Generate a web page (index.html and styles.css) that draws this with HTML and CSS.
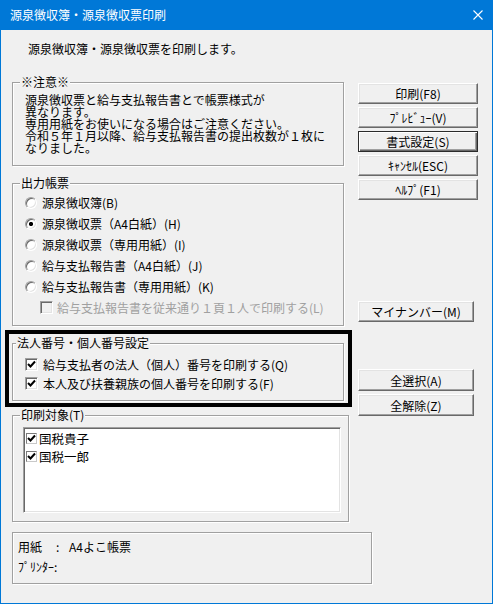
FILE: index.html
```html
<!DOCTYPE html>
<html lang="ja">
<head>
<meta charset="utf-8">
<title>源泉徴収簿・源泉徴収票印刷</title>
<link rel="stylesheet" href="styles.css">
</head>
<body>
<div class="window">
  <div class="titlebar">
    <span class="title">源泉徴収簿・源泉徴収票印刷</span>
    <svg class="close" width="10" height="10" viewBox="0 0 10 10"><path d="M0.5 0.5 L9.5 9.5 M9.5 0.5 L0.5 9.5" stroke="#fff" stroke-width="1.1" fill="none"/></svg>
  </div>
  <div class="client">
    <p class="intro">源泉徴収簿・源泉徴収票を印刷します。</p>
    <div class="main">
      <div class="left">
        <div class="group notice">
          <div class="legend">※注意※</div>
          <div class="notice-text">源泉徴収票と給与支払報告書とで帳票様式が<br>異なります。<br>専用用紙をお使いになる場合はご注意ください。<br>令和５年１月以降、給与支払報告書の提出枚数が１枚に<br>なりました。</div>
        </div>
        <div class="group output">
          <div class="legend">出力帳票</div>
          <div class="options">
            <div class="opt"><span class="rb"></span><span>源泉徴収簿(B)</span></div>
            <div class="opt"><span class="rb on"></span><span>源泉徴収票（A4白紙）(H)</span></div>
            <div class="opt"><span class="rb"></span><span>源泉徴収票（専用用紙）(I)</span></div>
            <div class="opt"><span class="rb"></span><span>給与支払報告書（A4白紙）(J)</span></div>
            <div class="opt"><span class="rb"></span><span>給与支払報告書（専用用紙）(K)</span></div>
            <div class="opt sub dis"><span class="cb off"></span><span>給与支払報告書を従来通り１頁１人で印刷する(L)</span></div>
          </div>
        </div>
        <div class="bold">
          <div class="group inner">
            <div class="legend near">法人番号・個人番号設定</div>
            <div class="checks">
              <div class="chk"><span class="cb"><svg width="9" height="9" viewBox="0 0 9 9"><path d="M1 4 L3.5 6.5 L8 1.5" stroke="#000" stroke-width="2" fill="none"/></svg></span><span>給与支払者の法人（個人）番号を印刷する(Q)</span></div>
              <div class="chk"><span class="cb"><svg width="9" height="9" viewBox="0 0 9 9"><path d="M1 4 L3.5 6.5 L8 1.5" stroke="#000" stroke-width="2" fill="none"/></svg></span><span>本人及び扶養親族の個人番号を印刷する(F)</span></div>
            </div>
          </div>
        </div>
        <div class="group target">
          <div class="legend">印刷対象(T)</div>
          <div class="listbox">
            <div class="item"><span class="cb small"><svg width="9" height="9" viewBox="0 0 9 9"><path d="M1 4 L3.5 6.5 L8 1.5" stroke="#000" stroke-width="2" fill="none"/></svg></span><span>国税貴子</span></div>
            <div class="item"><span class="cb small"><svg width="9" height="9" viewBox="0 0 9 9"><path d="M1 4 L3.5 6.5 L8 1.5" stroke="#000" stroke-width="2" fill="none"/></svg></span><span>国税一郎</span></div>
          </div>
        </div>
      </div>
      <div class="right">
        <button class="btn b-first">印刷(F8)</button>
        <button class="btn b-next">ﾌﾟﾚﾋﾞｭｰ(V)</button>
        <button class="btn b-next default">書式設定(S)</button>
        <button class="btn b-next">ｷｬﾝｾﾙ(ESC)</button>
        <button class="btn b-next">ﾍﾙﾌﾟ(F1)</button>
        <button class="btn narrow b-mynum">マイナンバー(M)</button>
        <button class="btn narrow tall b-all">全選択(A)</button>
        <button class="btn narrow tall b-none">全解除(Z)</button>
      </div>
    </div>
    <div class="info">
      <div class="info-line"><span class="k">用紙</span><span class="colon">:</span><span>A4よこ帳票</span></div>
      <div class="info-line">ﾌﾟﾘﾝﾀｰ:</div>
    </div>
  </div>
</div>
</body>
</html>
```

FILE: styles.css
```css
* { box-sizing: border-box; }
body {
  margin: 0;
  font-family: "Noto Sans CJK JP", "Noto Sans", sans-serif;
  font-size: 12px;
  color: #000;
  background: #f0f0f0;
}
.window {
  width: 493px;
  height: 604px;
  border: 1px solid #0078d7;
  border-top: none;
  background: #f0f0f0;
}
.titlebar {
  height: 30px;
  background: #0078d7;
  color: #fff;
  display: flex;
  align-items: center;
  justify-content: space-between;
  padding: 0 9px 0 9px;
}
.title { line-height: 12px; }
.close { display: block; }
.intro {
  margin: 13px 0 0 27px;
  line-height: 12px;
}
.main {
  display: flex;
  gap: 6px;
  margin: 27px 0 0 4px;
}
.left { width: 347px; }
.right {
  width: 120px;
  display: flex;
  flex-direction: column;
}
.group {
  margin-left: 7px;
  width: 332px;
  border: 1px solid #a0a0a0;
  box-shadow: inset 1px 1px 0 #fff, 1px 1px 0 #fff;
}
.legend {
  width: fit-content;
  margin: -7px 0 0 7px;
  padding: 0 1px;
  height: 12px;
  line-height: 12px;
  background: #f0f0f0;
  white-space: nowrap;
}
.legend.near { margin-left: 3px; }
.notice { height: 84px; }
.notice-text {
  margin: 6px 0 0 12px;
  line-height: 12px;
}
.output { margin-top: 17px; height: 143px; }
.options { margin: 3px 0 0 12px; }
.opt {
  height: 21px;
  display: flex;
  align-items: center;
  gap: 5px;
  white-space: nowrap;
}
.opt.sub { padding-left: 15px; gap: 4px; }
.opt.dis { color: #a0a0a0; }
.rb {
  width: 12px;
  height: 12px;
  border-radius: 50%;
  background: #fff;
  border: 1px solid;
  border-color: #a0a0a0 #fff #fff #a0a0a0;
  box-shadow: inset 1px 1px 0 #696969, inset -1px -1px 0 #e3e3e3;
  flex: none;
}
.rb.on {
  background: radial-gradient(circle, #000 0, #000 1.8px, #fff 2.4px);
}
.cb {
  width: 13px;
  height: 13px;
  background: #fff;
  border: 1px solid;
  border-color: #a0a0a0 #fff #fff #a0a0a0;
  box-shadow: inset 1px 1px 0 #696969, inset -1px -1px 0 #e3e3e3;
  display: flex;
  align-items: center;
  justify-content: center;
  flex: none;
}
.cb svg { display: block; }
.cb.off { background: #f0f0f0; }
.cb.small {
  width: 11px;
  height: 11px;
  border: 1px solid #7a7a7a;
  border-color: #7a7a7a #c8c8c8 #c8c8c8 #7a7a7a;
  box-shadow: none;
}
.bold {
  margin-top: 4px;
  width: 347px;
  height: 77px;
  border: 4px solid #000;
  padding: 9px 0 0 3px;
}
.inner { margin-left: 0; height: 58px; }
.checks { margin: 6px 0 0 12px; }
.chk {
  height: 19px;
  display: flex;
  align-items: center;
  gap: 5px;
  white-space: nowrap;
}
.target { margin-top: 8px; width: 337px; height: 107px; }
.listbox {
  margin: 6px 0 0 10px;
  width: 318px;
  height: 86px;
  background: #fff;
  border: 1px solid;
  border-color: #a0a0a0 #fff #fff #a0a0a0;
  box-shadow: inset 1px 1px 0 #696969, inset -1px -1px 0 #e3e3e3;
  padding: 1px 0 0 2px;
}
.item {
  height: 18px;
  display: flex;
  align-items: center;
  gap: 2px;
  font-size: 12.5px;
}
.btn {
  display: block;
  width: 120px;
  height: 21px;
  padding: 0;
  margin: 3px 0 0 0;
  font: inherit;
  line-height: 18px;
  color: #000;
  background: #f0f0f0;
  border: 1px solid;
  border-color: #fff #696969 #696969 #fff;
  box-shadow: inset -1px -1px 0 #a0a0a0, inset 1px 1px 0 #e3e3e3;
  text-align: center;
  white-space: nowrap;
}
.btn.b-first { margin-top: 1px; }
.btn.default {
  border: 1px solid #2b2b2b;
  box-shadow: inset 1px 1px 0 #fff, inset -1px -1px 0 #696969, inset -2px -2px 0 #a0a0a0;
}
.btn.narrow { width: 116px; }
.btn.tall { height: 22px; line-height: 19px; }
.b-mynum { margin-top: 101px; }
.b-all { margin-top: 47px; }
.b-none { margin-top: 3px; }
.info {
  margin: 10px 0 0 11px;
  width: 360px;
  height: 52px;
  border: 1px solid #a0a0a0;
  box-shadow: inset 1px 1px 0 #fff, 1px 1px 0 #fff;
  padding: 4px 0 0 5px;
}
.info-line {
  height: 20px;
  line-height: 20px;
  white-space: nowrap;
}
.k { display: inline-block; width: 38px; }
.colon { display: inline-block; width: 13px; }
```
